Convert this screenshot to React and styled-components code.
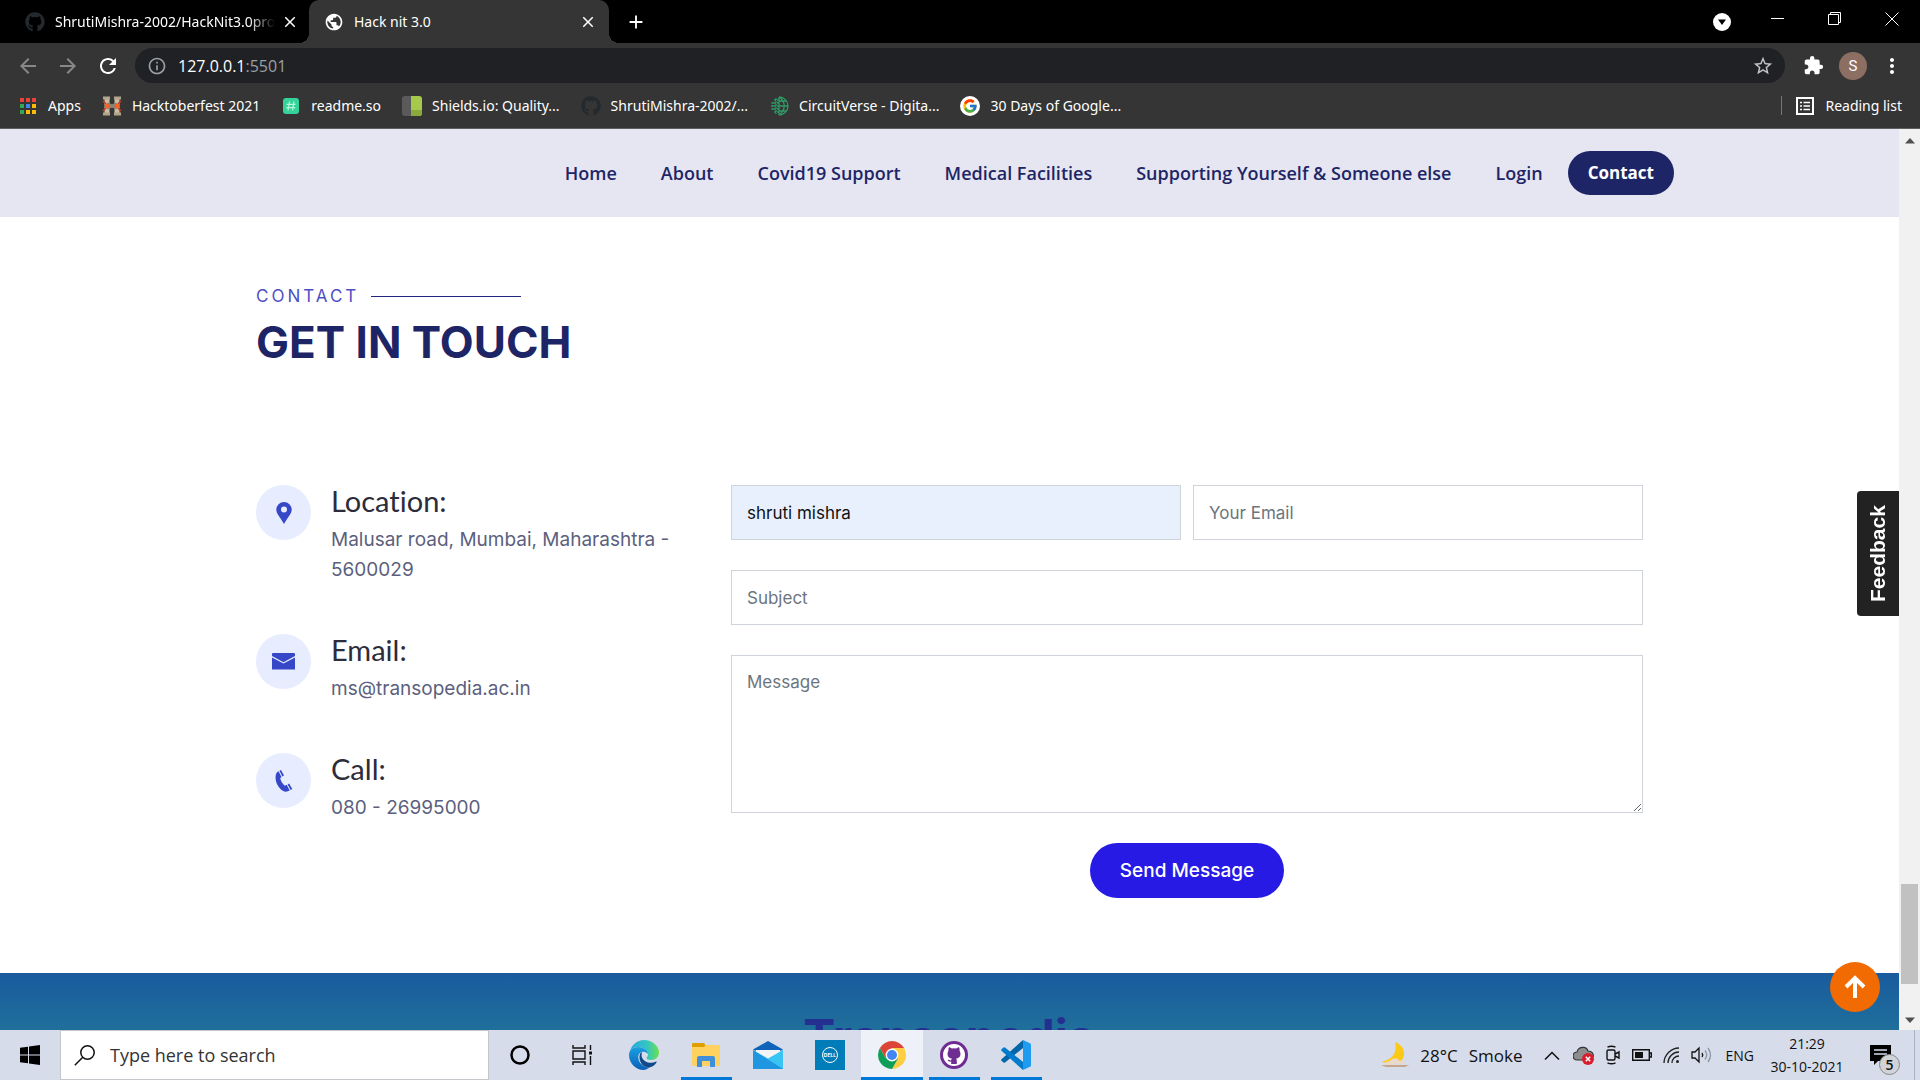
import React from "react";
import styled, { createGlobalStyle, css } from "styled-components";
import { FaGithub } from "react-icons/fa";
import { FcGoogle } from "react-icons/fc";
import {
  MdArrowBack,
  MdArrowForward,
  MdRefresh,
  MdInfoOutline,
  MdStarOutline,
  MdExtension,
  MdMoreVert,
  MdPublic,
  MdClose,
  MdAdd,
} from "react-icons/md";

const ui = `"Open Sans", "Noto Sans", sans-serif`;
const chromeUi = `"Noto Sans", "Open Sans", sans-serif`;
const display = `Inter, "Open Sans", sans-serif`;

const GlobalStyle = createGlobalStyle`
  *, *::before, *::after { box-sizing: border-box; }
  body { margin: 0; font-family: ${ui}; }
  button, input, textarea { font: inherit; }
  button { border: 0; padding: 0; background: none; color: inherit; cursor: pointer; }
  a { color: inherit; text-decoration: none; }
  h1, h2, h3, p, ul { margin: 0; padding: 0; }
  ul { list-style: none; }
  svg { display: block; flex: none; }
`;

const Desktop = styled.div`
  display: flex;
  flex-direction: column;
  height: 100vh;
  overflow: hidden;
`;

/* ---------- Browser chrome ---------- */

const TabStrip = styled.header`
  display: flex;
  flex: none;
  height: 43px;
  background: #000;
  color: #fff;
  font-family: ${chromeUi};
`;

const Tab = styled.div`
  position: relative;
  display: flex;
  align-items: center;
  gap: 10px;
  width: ${(p) => (p.$active ? 300 : 309)}px;
  padding: 0 14px 0 ${(p) => (p.$active ? 15 : 25)}px;
  font-size: 14px;
  ${(p) =>
    p.$active &&
    css`
      background: #353535;
      border-radius: 10px 10px 0 0;
      &::before,
      &::after {
        content: "";
        position: absolute;
        bottom: 0;
        width: 10px;
        height: 10px;
      }
      &::before {
        left: -10px;
        background: radial-gradient(circle at 0 0, transparent 10px, #353535 10px);
      }
      &::after {
        right: -10px;
        background: radial-gradient(circle at 100% 0, transparent 10px, #353535 10px);
      }
    `}
`;

const TabTitle = styled.span`
  flex: 1;
  overflow: hidden;
  white-space: nowrap;
  ${(p) => p.$fade && css`mask-image: linear-gradient(90deg, #000 88%, transparent);`}
`;

const IconButton = styled.button`
  display: flex;
  align-items: center;
  justify-content: center;
  width: ${(p) => p.$w || 40}px;
  height: ${(p) => p.$h || 34}px;
  color: ${(p) => p.$color || "#fff"};
`;

const WindowControls = styled.div`
  display: flex;
  align-items: flex-start;
  margin-left: auto;
`;

const Toolbar = styled.div`
  display: flex;
  flex: none;
  align-items: center;
  height: 45px;
  padding: 0 8px;
  background: #353535;
`;

const AddressBar = styled.div`
  display: flex;
  flex: 1;
  align-items: center;
  height: 35px;
  margin: 0 8px 0 7px;
  padding: 0 11px 0 12px;
  border-radius: 18px;
  background: #202124;
  color: #9aa0a6;
  font-size: 16px;
`;

const UrlInput = styled.input`
  field-sizing: content;
  margin-left: 11px;
  padding: 0;
  border: 0;
  background: none;
  color: #fff;
  outline: 0;
`;

const UrlPort = styled.span`
  flex: 1;
`;

const Avatar = styled.button`
  width: 28px;
  height: 28px;
  margin: 0 5px 0 6px;
  border-radius: 50%;
  background: #8d6e63;
  color: #fff;
  font-family: Roboto, sans-serif;
  font-size: 15px;
`;

const Bookmarks = styled.nav`
  display: flex;
  flex: none;
  align-items: center;
  gap: 21px;
  height: 41px;
  padding: 0 18px 5px;
  border-bottom: 1px solid #5f5f5f;
  background: #353535;
  color: #fff;
  font-family: ${chromeUi};
  font-size: 14px;
  white-space: nowrap;
`;

const Bookmark = styled.a`
  display: flex;
  align-items: center;
  gap: 10px;
`;

const ReadingList = styled.button`
  display: flex;
  align-items: center;
  gap: 11px;
  margin-left: auto;
  padding-left: 14px;
  border-left: 1px solid #777;
`;

/* ---------- Page ---------- */

const Viewport = styled.div`
  position: relative;
  display: flex;
  flex: 1;
  min-height: 0;
  overflow: hidden;
  background: #fff;
`;

const Page = styled.div`
  flex: 1;
  min-width: 0;
`;

const NavBar = styled.header`
  height: 88px;
  background: #e6e6f2;
`;

const NavList = styled.nav`
  display: flex;
  align-items: center;
  justify-content: flex-end;
  gap: 44px;
  max-width: 1449px;
  height: 100%;
  margin: 0 auto;
  color: #1e2566;
  font: 600 18px ${ui};
`;

const NavPill = styled.a`
  margin-left: -19px;
  padding: 0 20px;
  border-radius: 22px;
  background: #1e2566;
  color: #fff;
  font-size: 17px;
  font-weight: 700;
  line-height: 44px;
`;

const Section = styled.main`
  max-width: 1387px;
  margin: 0 auto;
  padding: 68px 0 75px;
`;

const Kicker = styled.h2`
  display: flex;
  align-items: center;
  gap: 12px;
  color: #4f4fc4;
  font: 400 17px/23px ${display};
  letter-spacing: 3px;
  &::after {
    content: "";
    width: 150px;
    height: 1px;
    background: #23277d;
  }
`;

const SectionTitle = styled.h1`
  margin-top: 7px;
  color: #1e2566;
  font: 700 44px/54px ${display};
`;

const ContactGrid = styled.div`
  display: grid;
  grid-template-columns: repeat(12, 1fr);
  gap: 38px;
  margin-top: 116px;
`;

const InfoList = styled.ul`
  display: flex;
  flex-direction: column;
  grid-column: span 4;
  gap: 49px;
`;

const InfoItem = styled.li`
  display: flex;
  gap: 20px;
`;

const InfoIcon = styled.span`
  display: flex;
  flex: none;
  align-items: center;
  justify-content: center;
  width: 55px;
  height: 55px;
  border-radius: 50%;
  background: #e7edfe;
  color: #3648c8;
`;

const InfoTitle = styled.h3`
  color: #2c2c3a;
  font: 400 29px/31px Lato, sans-serif;
  font-variant-ligatures: none;
`;

const InfoText = styled.p`
  margin-top: 9px;
  color: #5c5f7e;
  font: 400 19px/30px ${display};
`;

const ContactForm = styled.form`
  display: grid;
  grid-column: span 8;
  grid-template-columns: 1fr 1fr;
  gap: 30px 12px;
  justify-items: stretch;
  font: 400 17px ${display};
`;

const fieldStyle = css`
  width: 100%;
  padding: 13px 15px;
  border: 1px solid #ced4da;
  border-radius: 0;
  background: ${(p) => (p.$filled ? "#e8f0fe" : "#fff")};
  color: #111;
  outline: 0;
  &::placeholder {
    color: #6c757d;
    opacity: 1;
  }
`;

const Field = styled.input`
  ${fieldStyle}
  grid-column: span ${(p) => (p.$wide ? 2 : 1)};
  height: 55px;
`;

const MessageField = styled.textarea`
  ${fieldStyle}
  display: block;
  grid-column: span 2;
  height: 158px;
  line-height: 26px;
  resize: vertical;
`;

const SubmitButton = styled.button`
  grid-column: span 2;
  justify-self: center;
  height: 55px;
  padding: 0 30px;
  border-radius: 28px;
  background: #261ae4;
  color: #fff;
  font: 500 19px ${display};
`;

const PageFooter = styled.footer`
  height: 400px;
  padding-top: 34px;
  background: linear-gradient(#195b9e, #1f6f9b 57px, #2cb5a0);
  color: #24308f;
  font: 700 48px/60px ${display};
  text-align: center;
`;

const FeedbackTab = styled.button`
  position: absolute;
  top: 362px;
  right: 21px;
  width: 42px;
  height: 125px;
  border-radius: 0 4px 4px 0;
  background: #222;
  color: #fff;
  font: 700 21px "Liberation Sans", Arial, sans-serif;
  writing-mode: vertical-rl;
  transform: rotate(180deg);
`;

const BackToTop = styled.a`
  position: absolute;
  right: 40px;
  bottom: 18px;
  display: flex;
  align-items: center;
  justify-content: center;
  width: 50px;
  height: 50px;
  border-radius: 50%;
  background: #f26a02;
`;

const ScrollTrack = styled.div`
  display: flex;
  flex: none;
  flex-direction: column;
  align-items: center;
  width: 21px;
  padding: 9px 0 7px;
  background: #f1f1f1;
`;

const ScrollThumb = styled.div`
  width: 17px;
  height: 100px;
  margin: auto 0 33px;
  background: #c1c1c1;
`;

/* ---------- Taskbar ---------- */

const Taskbar = styled.footer`
  display: flex;
  flex: none;
  height: 50px;
  background: #d6dcea;
  color: #111;
`;

const SearchBox = styled.label`
  display: flex;
  align-items: center;
  gap: 15px;
  width: 429px;
  padding-left: 13px;
  border: 1px solid #c4c6cb;
  background: #fff;
`;

const SearchInput = styled.input`
  flex: 1;
  min-width: 0;
  border: 0;
  padding: 0;
  background: none;
  font-size: 18px;
  outline: 0;
  &::placeholder {
    color: #333;
    opacity: 1;
  }
`;

const TaskButton = styled.button`
  position: relative;
  display: flex;
  align-items: center;
  justify-content: center;
  width: ${(p) => p.$w || 62}px;
  background: ${(p) => (p.$active ? "#eef1f8" : "none")};
  ${(p) =>
    (p.$open || p.$active) &&
    css`
      &::after {
        content: "";
        position: absolute;
        right: ${p.$active ? 0 : 5}px;
        bottom: 0;
        left: ${p.$active ? 0 : 6}px;
        height: 3px;
        background: #0078d7;
      }
    `}
`;

const Tray = styled.div`
  display: flex;
  align-items: center;
  gap: 11px;
  margin-left: auto;
  font-size: 14px;
`;

const Weather = styled.button`
  display: flex;
  align-items: center;
  gap: 11px;
  margin-right: 10px;
  font-size: 17px;
`;

const Language = styled.button`
  margin-left: 3px;
`;

const Clock = styled.time`
  width: 84px;
  font-size: 14px;
  line-height: 23px;
  text-align: center;
`;

const Notifications = styled.button`
  position: relative;
  width: 55px;
  height: 50px;
  margin-right: 5px;
  padding-left: 10px;
  border-right: 1px solid #a9b2c4;
`;

const Badge = styled.span`
  position: absolute;
  top: 24px;
  left: 19px;
  width: 21px;
  height: 21px;
  border: 1px solid #888;
  border-radius: 50%;
  background: #d0d3d8;
  font-size: 14px;
  font-weight: 600;
  line-height: 19px;
`;

/* ---------- Drawings ---------- */

const AppsIcon = () => {
  const colors = ["#ea4335", "#ea4335", "#ea4335", "#34a853", "#4285f4", "#fbbc05", "#34a853", "#fbbc05", "#fbbc05"];
  return (
    <svg width="20" height="20" viewBox="0 0 20 20">
      {colors.map((c, i) => (
        <rect key={i} x={2 + (i % 3) * 6} y={2 + Math.floor(i / 3) * 6} width="4" height="4" fill={c} />
      ))}
    </svg>
  );
};

const HacktoberIcon = () => (
  <svg width="20" height="20" viewBox="0 0 20 20">
    <path d="M5 2v16M15 2v16" stroke="#c9bda5" strokeWidth="5" />
    <path d="M1 2h7M12 2h7M1 18h7M12 18h7" stroke="#b3a58c" strokeWidth="3" />
    <path d="M5 8l10 4M5 12l10-4" stroke="#8d8170" strokeWidth="3" />
    <path d="M1 5l3 3M1 15l3-3M19 5l-3 3M19 15l-3-3" stroke="#c23b22" strokeWidth="1.6" />
    <circle cx="5" cy="10" r="2.200" fill="#ff5f1f" />
    <circle cx="15" cy="10" r="2.200" fill="#ff5f1f" />
  </svg>
);

const ReadmeIcon = () => (
  <svg width="20" height="20" viewBox="0 0 20 20">
    <rect x="2" y="2" width="16" height="16" rx="3" fill="#34d399" />
    <path d="M8.500 5.500l-1.500 9M13 5.500l-1.500 9M5.500 8.300h9M5.200 11.700h9" stroke="#b8f5dc" strokeWidth="1.200" />
  </svg>
);

const ShieldsIcon = () => (
  <svg width="20" height="20" viewBox="0 0 20 20">
    <rect width="20" height="20" rx="3" fill="#5a5a5a" />
    <path d="M9 0h8a3 3 0 0 1 3 3v14a3 3 0 0 1-3 3H9z" fill="#a4c94b" />
    <path d="M9 14h11v3a3 3 0 0 1-3 3H9z" fill="#8aab3c" />
  </svg>
);

const CircuitIcon = () => (
  <svg width="20" height="20" viewBox="0 0 20 20" fill="none" stroke="#2f9a66" strokeWidth="1.300">
    <path d="M10 1a9 9 0 0 1 0 18M10 1v18M10 1c7 5 7 13 0 18M10 5h7.500M10 10h9M10 15h7.500" />
    <path d="M10 4H5M10 7H2.500M10 10H1M10 13H2.500M10 16H5M7 2v16M4 6v9" strokeDasharray="2 1" />
  </svg>
);

const GoogleDisc = styled.span`
  display: flex;
  align-items: center;
  justify-content: center;
  width: 20px;
  height: 20px;
  border-radius: 50%;
  background: #fff;
`;

const ListIcon = () => (
  <svg width="18" height="18" viewBox="0 0 18 18" fill="none" stroke="#fff">
    <rect x="1" y="1" width="16" height="16" strokeWidth="2" />
    <path d="M4 5.500h2M4 9h2M4 12.500h2M7.500 5.500H14M7.500 9H14M7.500 12.500H14" strokeWidth="1.500" />
  </svg>
);

const UpdateIcon = () => (
  <svg width="18" height="18" viewBox="0 0 18 18">
    <circle cx="9" cy="9" r="9" fill="#fff" />
    <path d="M5 6.500h8L9 12z" fill="#000" />
  </svg>
);

const PinIcon = () => (
  <svg width="16" height="22" viewBox="0 0 16 22">
    <path fillRule="evenodd" fill="currentColor" d="M8 0a7.700 7.700 0 0 1 7.700 7.700C15.700 12 11 16 8 22 5 16 .3 12 .3 7.700A7.700 7.700 0 0 1 8 0zm0 4.600a3 3 0 1 0 0 6 3 3 0 0 0 0-6z" />
  </svg>
);

const EnvelopeIcon = () => (
  <svg width="23" height="17" viewBox="0 0 23 17" fill="currentColor">
    <path d="M1 0h21q1 0 1 1v2L11.500 9.200 0 3V1q0-1 1-1z" />
    <path d="M0 4.600l11.500 6L23 4.600V16.500H0z" />
  </svg>
);

const HandsetIcon = () => (
  <svg width="18" height="22" viewBox="0 0 18 22" fill="currentColor">
    <path d="M3.500 1.200l3 5.800-1.300 1.300c.8 3.200 2.400 5.700 4.700 7.400l1.800-.9 3 5.700c-3 1.800-6.200 1.500-9-1.200C2 15.700.3 11.200.6 6.500.7 3.800 1.600 2 3.500 1.200z" />
    <path d="M4.400.7L6 0l3 5.600-1.600.9zM12.600 14.400l1.500-.9 3.200 5.500-1.600 1z" />
  </svg>
);

const EdgeIcon = () => (
  <svg width="30" height="30" viewBox="0 0 30 30">
    <defs>
      <linearGradient id="edgeTop" x1="0" x2="1"><stop stopColor="#2aa8e0" /><stop offset=".6" stopColor="#34c6c0" /><stop offset="1" stopColor="#6be04d" /></linearGradient>
      <linearGradient id="edgeSide" x1="0" y1="0" x2="0" y2="1"><stop stopColor="#1ba0e2" /><stop offset="1" stopColor="#0a5fb8" /></linearGradient>
    </defs>
    <path d="M1 12C2 5 8 0 15 0c8 0 15 6 15 12.500 0 4.500-3.500 7.500-7.500 7.500-3 0-5-1-5-2 0-.7 1.500-1.500 1.500-3.700C19 10 14 7 9 7c-4 0-7 2-8 5z" fill="url(#edgeTop)" />
    <path d="M0 15C0 10 4 7 9 7c5 0 10 3 10 7-1-1.500-3-2.500-5-2.300-3.500.3-5.500 3.300-4.500 7.300 1.200 5.500 6 8.500 11 8.500-2 1.600-4 2.500-6 2.500C6.500 30 0 23 0 15z" fill="url(#edgeSide)" />
    <path d="M11.500 13C8.500 18 12 28 20.500 27.500c3-.5 5.500-2.500 7-5 .4-.7-.2-1.100-.8-.8C22 24 14.500 22.500 12.800 17c-.4-1.500-.3-3 .4-4.800z" fill="#114a8b" />
  </svg>
);

const FolderIcon = () => (
  <svg width="28" height="24" viewBox="0 0 28 24">
    <path d="M0 1a1 1 0 0 1 1-1h11l2 3-2 3H0z" fill="#e09f00" />
    <path d="M0 4h12l2-2h13a1 1 0 0 1 1 1v19a1 1 0 0 1-1 1H1a1 1 0 0 1-1-1z" fill="#ffd25f" />
    <path d="M5 24V15a2 2 0 0 1 2-2h14a2 2 0 0 1 2 2v9h-5v-6h-8v6z" fill="#3f8fdb" />
  </svg>
);

const MailIcon = () => (
  <svg width="30" height="28" viewBox="0 0 30 28">
    <path d="M0 8.500L15 0l15 8.500-15 8z" fill="#0f63b8" />
    <path d="M3 9h24v6l-12 6L3 15z" fill="#f4f4f6" />
    <path d="M0 9l15 8.500L30 9v19H0z" fill="#39c4f3" />
    <path d="M0 9l30 19H0z" fill="#1f96e0" />
  </svg>
);

const DellTile = styled.span`
  display: flex;
  align-items: center;
  justify-content: center;
  width: 30px;
  height: 30px;
  background: #007db8;
  color: #fff;
`;

const DellRing = styled.span`
  width: 16px;
  height: 16px;
  border: 1px solid #fff;
  border-radius: 50%;
  font: 700 5px/14px ${display};
`;

const ChromeIcon = () => (
  <svg width="28" height="28" viewBox="0 0 28 28">
    <path d="M14 14l0-7h12.100A14 14 0 0 1 14 28l6-10.500z" fill="#ffcd40" />
    <path d="M14 14l6 3.500L14 28A14 14 0 0 1 1.900 7l6 10.500z" fill="#0f9d58" />
    <path d="M14 7h12.100A14 14 0 0 0 1.900 7l6 10.500z" fill="#db4437" />
    <circle cx="14" cy="14" r="6.400" fill="#fff" />
    <circle cx="14" cy="14" r="5" fill="#4285f4" />
  </svg>
);

const GithubDisc = styled.span`
  display: flex;
  align-items: center;
  justify-content: center;
  width: 28px;
  height: 28px;
  border: 3px solid #6f2c91;
  border-radius: 50%;
  background: #fff;
  color: #6f2c91;
`;

const CatIcon = () => (
  <svg width="16" height="20" viewBox="0 0 16 20">
    <path d="M3 2l3 1.500q2-.6 4 0L13 2q1 2 .5 3.500 1 1.500 1 3.500c0 3-2 4.300-4.500 4.600.5.600.8 1.300.8 2.400v3H5.200v-2.500c-2 .5-3-.5-3.500-1.600 1.500-.3 1.500.8 3.500.4 0-.7.3-1.300.8-1.700C3.500 13.300 1.500 12 1.500 9q0-2 1-3.500Q2 4 3 2z" fill="currentColor" />
  </svg>
);

const CodeIcon = () => (
  <svg width="30" height="30" viewBox="0 0 30 30">
    <path d="M22 0v8L4 22.500q-.8.500-1.500 0L.5 20.800q-.8-.8 0-1.600z" fill="#0065a9" />
    <path d="M22 30v-8L4 7.500q-.8-.5-1.500 0L.5 9.200q-.8.800 0 1.600z" fill="#007acc" />
    <path d="M22 0l7 3.200q1 .5 1 1.600v20.400q0 1.100-1 1.600L22 30z" fill="#1f9cf0" />
  </svg>
);

const WindowsIcon = () => (
  <svg width="20" height="20" viewBox="0 0 20 20">
    <path d="M0 2.800l8-1.100v7.800H0zM9 1.500L20 0v9.500H9zM0 10.500h8v7.800l-8-1.100zM9 10.500h11V20L9 18.500z" fill="#000" />
  </svg>
);

const SearchIcon = () => (
  <svg width="21" height="21" viewBox="0 0 21 21" fill="none" stroke="#111" strokeWidth="1.500">
    <circle cx="13.500" cy="7.500" r="6.700" />
    <path d="M8.800 12.200L.8 20.200" />
  </svg>
);

const TaskViewIcon = () => (
  <svg width="21" height="20" viewBox="0 0 21 20" fill="none" stroke="#111" strokeWidth="1.400">
    <path d="M1 0v3h12V0M1 20v-3h12v3M1 6h12v8H1zM18.500 0v5M18.500 11v9" />
    <path d="M18.500 6.500v3" strokeWidth="3" />
  </svg>
);

const MoonIcon = () => (
  <svg width="28" height="27" viewBox="0 0 28 27">
    <path d="M14 0c8 3 11 10 8 16-3 7-15 8-21 3C10 19 17 11 14 0z" fill="#fcc916" />
    <path d="M3 23c2-5 6-3 7-5 3-3 8-2 8 1 4-1 6 1 6 3z" fill="#e8d9cb" />
    <path d="M0 23h28l-4 2H5z" fill="#c7a58b" />
  </svg>
);

const CloudErrorIcon = () => (
  <svg width="21" height="20" viewBox="0 0 21 20">
    <path d="M4 15a4 4 0 0 1 0-8c1-5 9-7 11-1 4 0 6 3 5 6l-4 3z" fill="#8d8d8d" stroke="#333" strokeWidth="1.200" />
    <circle cx="15" cy="14" r="6" fill="#d81e2c" />
    <path d="M12.800 11.800l4.400 4.400M17.200 11.800l-4.400 4.400" stroke="#fff" strokeWidth="1.500" />
  </svg>
);

const MeetIcon = () => (
  <svg width="16" height="20" viewBox="0 0 16 20" fill="none" stroke="#111" strokeWidth="1.400">
    <rect x="2" y="5" width="8" height="10" rx="1.500" />
    <path d="M10 9l4-2v6l-4-2M2.500 2.200q4-2 8 0M2.500 17.800q4 2 8 0" />
  </svg>
);

const BatteryIcon = () => (
  <svg width="20" height="12" viewBox="0 0 20 12">
    <path d="M.7.700h16.600v10.600H.7zM18 4h1.300v4H18" fill="none" stroke="#111" strokeWidth="1.400" />
    <rect x="3" y="3" width="8" height="6" fill="#111" />
  </svg>
);

const WifiIcon = () => (
  <svg width="17" height="17" viewBox="0 0 17 17" fill="none" stroke="#222" strokeWidth="1.300">
    <path d="M1 16C1 8 8 1 16 1M5 16C5 10 10 5 16 5M9 16c0-4 3-7 7-7" />
    <circle cx="14.500" cy="14.500" r="1.500" fill="#222" stroke="none" />
  </svg>
);

const SpeakerIcon = () => (
  <svg width="21" height="18" viewBox="0 0 21 18" fill="none" stroke="#111" strokeWidth="1.300">
    <path d="M1 6h3l4-4v14l-4-4H1zM11 7q1.500 2 0 4" />
    <path d="M14 4.500q3.500 4.500 0 9M17 2q5 7 0 14" stroke="#8c93a3" />
  </svg>
);

const NoteIcon = () => (
  <svg width="21" height="20" viewBox="0 0 21 20">
    <path d="M0 0h21v16H8l-4 4v-4H0z" fill="#000" />
    <path d="M4 5h13M4 9h13" stroke="#d6dcea" strokeWidth="1.600" />
  </svg>
);

const bookmarks = [
  ["Apps", <AppsIcon />],
  ["Hacktoberfest 2021", <HacktoberIcon />],
  ["readme.so", <ReadmeIcon />],
  ["Shields.io: Quality...", <ShieldsIcon />],
  ["ShrutiMishra-2002/...", <FaGithub size={20} color="#24292e" />],
  ["CircuitVerse - Digita...", <CircuitIcon />],
  ["30 Days of Google...", <GoogleDisc><FcGoogle size={16} /></GoogleDisc>],
];

const navLinks = ["Home", "About", "Covid19 Support", "Medical Facilities", "Supporting Yourself & Someone else", "Login"];

const contactInfo = [
  ["Location:", "Malusar road, Mumbai, Maharashtra - 5600029", <PinIcon />],
  ["Email:", "ms@transopedia.ac.in", <EnvelopeIcon />],
  ["Call:", "080 - 26995000", <HandsetIcon />],
];

const tasks = [
  ["Cortana", <svg width="20" height="20"><circle cx="10" cy="10" r="8.500" fill="none" stroke="#000" strokeWidth="2.500" /></svg>],
  ["Task view", <TaskViewIcon />],
  ["Edge", <EdgeIcon />],
  ["File Explorer", <FolderIcon />, "open"],
  ["Mail", <MailIcon />],
  ["Dell", <DellTile><DellRing>DELL</DellRing></DellTile>],
  ["Chrome", <ChromeIcon />, "active"],
  ["GitHub Desktop", <GithubDisc><CatIcon /></GithubDisc>, "open"],
  ["Visual Studio Code", <CodeIcon />, "open"],
];

export default function App() {
  return (
    <Desktop>
      <GlobalStyle />
      <TabStrip>
        <Tab>
          <FaGithub size={20} color="#24292e" />
          <TabTitle $fade>ShrutiMishra-2002/HackNit3.0pro</TabTitle>
          <IconButton $w={10} aria-label="Close tab"><MdClose size={18} /></IconButton>
        </Tab>
        <Tab $active>
          <MdPublic size={20} />
          <TabTitle>Hack nit 3.0</TabTitle>
          <IconButton $w={14} aria-label="Close tab"><MdClose size={18} /></IconButton>
        </Tab>
        <IconButton $w={54} $h={43} aria-label="New tab"><MdAdd size={22} /></IconButton>
        <WindowControls>
          <IconButton $w={54} $h={43} aria-label="Search tabs"><UpdateIcon /></IconButton>
          <IconButton $w={57} $h={37} aria-label="Minimize">
            <svg width="13" height="13"><path d="M0 6.500h13" stroke="#fff" /></svg>
          </IconButton>
          <IconButton $w={57} $h={37} aria-label="Restore">
            <svg width="14" height="14" fill="none" stroke="#fff"><path d="M.5 2.500h10v10H.5zM2.500 2V.5h10v10H11" /></svg>
          </IconButton>
          <IconButton $w={57} $h={37} aria-label="Close window">
            <svg width="14" height="14"><path d="M.5.500l13 13M13.500.500l-13 13" stroke="#fff" /></svg>
          </IconButton>
        </WindowControls>
      </TabStrip>
      <Toolbar>
        <IconButton $color="#888" aria-label="Back"><MdArrowBack size={24} /></IconButton>
        <IconButton $color="#888" aria-label="Forward"><MdArrowForward size={24} /></IconButton>
        <IconButton aria-label="Reload"><MdRefresh size={24} /></IconButton>
        <AddressBar>
          <MdInfoOutline size={20} />
          <UrlInput aria-label="Address" defaultValue="127.0.0.1" />
          <UrlPort>:5501</UrlPort>
          <MdStarOutline size={22} color="#c4c7c5" />
        </AddressBar>
        <IconButton aria-label="Extensions"><MdExtension size={21} /></IconButton>
        <Avatar aria-label="Profile">S</Avatar>
        <IconButton aria-label="Menu"><MdMoreVert size={24} /></IconButton>
      </Toolbar>
      <Bookmarks>
        {bookmarks.map(([label, icon]) => (
          <Bookmark key={label} href="#">{icon}{label}</Bookmark>
        ))}
        <ReadingList><ListIcon />Reading list</ReadingList>
      </Bookmarks>

      <Viewport>
        <Page>
          <NavBar>
            <NavList>
              {navLinks.map((label) => <a key={label} href="#">{label}</a>)}
              <NavPill href="#">Contact</NavPill>
            </NavList>
          </NavBar>
          <Section>
            <Kicker>CONTACT</Kicker>
            <SectionTitle>GET IN TOUCH</SectionTitle>
            <ContactGrid>
              <InfoList>
                {contactInfo.map(([title, text, icon]) => (
                  <InfoItem key={title}>
                    <InfoIcon>{icon}</InfoIcon>
                    <div>
                      <InfoTitle>{title}</InfoTitle>
                      <InfoText>{text}</InfoText>
                    </div>
                  </InfoItem>
                ))}
              </InfoList>
              <ContactForm onSubmit={(e) => e.preventDefault()}>
                <Field $filled aria-label="Your Name" defaultValue="shruti mishra" />
                <Field type="email" aria-label="Your Email" placeholder="Your Email" />
                <Field $wide aria-label="Subject" placeholder="Subject" />
                <MessageField aria-label="Message" placeholder="Message" />
                <SubmitButton type="submit">Send Message</SubmitButton>
              </ContactForm>
            </ContactGrid>
          </Section>
          <PageFooter>Transopedia</PageFooter>
        </Page>
        <FeedbackTab>Feedback</FeedbackTab>
        <BackToTop href="#" aria-label="Back to top">
          <svg width="22" height="24" viewBox="0 0 22 24" fill="none" stroke="#fff" strokeWidth="4">
            <path d="M11 23V3M2 12l9-9 9 9" />
          </svg>
        </BackToTop>
        <ScrollTrack>
          <svg width="10" height="6"><path d="M5 0l5 5.500H0z" fill="#505050" /></svg>
          <ScrollThumb />
          <svg width="10" height="6"><path d="M5 6l5-5.500H0z" fill="#505050" /></svg>
        </ScrollTrack>
      </Viewport>

      <Taskbar>
        <TaskButton $w={60} aria-label="Start"><WindowsIcon /></TaskButton>
        <SearchBox>
          <SearchIcon />
          <SearchInput aria-label="Search" placeholder="Type here to search" />
        </SearchBox>
        {tasks.map(([label, icon, state]) => (
          <TaskButton key={label} aria-label={label} $open={state === "open"} $active={state === "active"}>{icon}</TaskButton>
        ))}
        <Tray>
          <Weather><MoonIcon /><span>28°C</span><span>Smoke</span></Weather>
          <svg width="18" height="9"><path d="M1 8.500l7-7 7 7" fill="none" stroke="#111" strokeWidth="1.500" /></svg>
          <CloudErrorIcon />
          <MeetIcon />
          <BatteryIcon />
          <WifiIcon />
          <SpeakerIcon />
          <Language>ENG</Language>
          <Clock>21:29<br />30-10-2021</Clock>
          <Notifications aria-label="Notifications"><NoteIcon /><Badge>5</Badge></Notifications>
        </Tray>
      </Taskbar>
    </Desktop>
  );
}
